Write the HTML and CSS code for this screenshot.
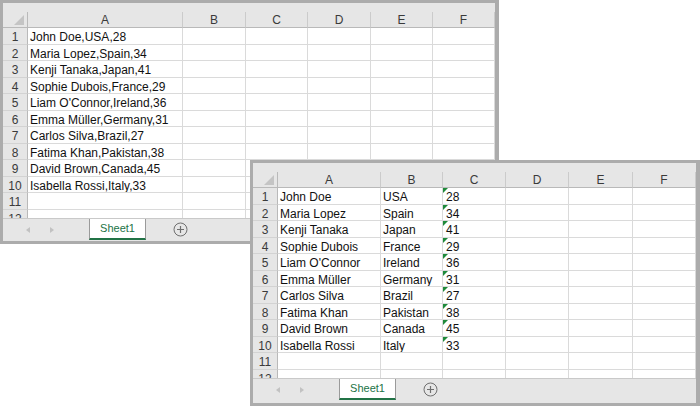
FILE: index.html
```html
<!DOCTYPE html>
<html>
<head>
<meta charset="utf-8">
<link rel="stylesheet" href="styles.css">
</head>
<body>
<div class="win win1">
  <div class="pad"></div>
  <div class="sheet">
    <div class="c corner"><span class="tri"></span></div>
    <div class="c h">A</div><div class="c h">B</div><div class="c h">C</div><div class="c h">D</div><div class="c h">E</div><div class="c h">F</div>
    <div class="c r">1</div><div class="c">John Doe,USA,28</div><div class="c"></div><div class="c"></div><div class="c"></div><div class="c"></div><div class="c"></div>
    <div class="c r">2</div><div class="c">Maria Lopez,Spain,34</div><div class="c"></div><div class="c"></div><div class="c"></div><div class="c"></div><div class="c"></div>
    <div class="c r">3</div><div class="c">Kenji Tanaka,Japan,41</div><div class="c"></div><div class="c"></div><div class="c"></div><div class="c"></div><div class="c"></div>
    <div class="c r">4</div><div class="c">Sophie Dubois,France,29</div><div class="c"></div><div class="c"></div><div class="c"></div><div class="c"></div><div class="c"></div>
    <div class="c r">5</div><div class="c">Liam O'Connor,Ireland,36</div><div class="c"></div><div class="c"></div><div class="c"></div><div class="c"></div><div class="c"></div>
    <div class="c r">6</div><div class="c">Emma Müller,Germany,31</div><div class="c"></div><div class="c"></div><div class="c"></div><div class="c"></div><div class="c"></div>
    <div class="c r">7</div><div class="c">Carlos Silva,Brazil,27</div><div class="c"></div><div class="c"></div><div class="c"></div><div class="c"></div><div class="c"></div>
    <div class="c r">8</div><div class="c">Fatima Khan,Pakistan,38</div><div class="c"></div><div class="c"></div><div class="c"></div><div class="c"></div><div class="c"></div>
    <div class="c r">9</div><div class="c">David Brown,Canada,45</div><div class="c"></div><div class="c"></div><div class="c"></div><div class="c"></div><div class="c"></div>
    <div class="c r">10</div><div class="c">Isabella Rossi,Italy,33</div><div class="c"></div><div class="c"></div><div class="c"></div><div class="c"></div><div class="c"></div>
    <div class="c r">11</div><div class="c"></div><div class="c"></div><div class="c"></div><div class="c"></div><div class="c"></div><div class="c"></div>
    <div class="c r">12</div><div class="c"></div><div class="c"></div><div class="c"></div><div class="c"></div><div class="c"></div><div class="c"></div>
  </div>
  <div class="tabs">
    <div class="nav"><span class="arr left"></span><span class="arr right"></span></div>
    <div class="tab">Sheet1</div>
    <svg class="plus" width="15" height="15" viewBox="0 0 15 15"><circle cx="7.5" cy="7.5" r="6.5" fill="none" stroke="#6f6f6f" stroke-width="1"/><path d="M7.5 4v7M4 7.5h7" stroke="#6f6f6f" stroke-width="1.2"/></svg>
  </div>
</div>

<div class="win win2">
  <div class="pad"></div>
  <div class="sheet">
    <div class="c corner"><span class="tri"></span></div>
    <div class="c h">A</div><div class="c h">B</div><div class="c h">C</div><div class="c h">D</div><div class="c h">E</div><div class="c h">F</div>
    <div class="c r">1</div><div class="c">John Doe</div><div class="c">USA</div><div class="c n">28</div><div class="c"></div><div class="c"></div><div class="c"></div>
    <div class="c r">2</div><div class="c">Maria Lopez</div><div class="c">Spain</div><div class="c n">34</div><div class="c"></div><div class="c"></div><div class="c"></div>
    <div class="c r">3</div><div class="c">Kenji Tanaka</div><div class="c">Japan</div><div class="c n">41</div><div class="c"></div><div class="c"></div><div class="c"></div>
    <div class="c r">4</div><div class="c">Sophie Dubois</div><div class="c">France</div><div class="c n">29</div><div class="c"></div><div class="c"></div><div class="c"></div>
    <div class="c r">5</div><div class="c">Liam O'Connor</div><div class="c">Ireland</div><div class="c n">36</div><div class="c"></div><div class="c"></div><div class="c"></div>
    <div class="c r">6</div><div class="c">Emma Müller</div><div class="c">Germany</div><div class="c n">31</div><div class="c"></div><div class="c"></div><div class="c"></div>
    <div class="c r">7</div><div class="c">Carlos Silva</div><div class="c">Brazil</div><div class="c n">27</div><div class="c"></div><div class="c"></div><div class="c"></div>
    <div class="c r">8</div><div class="c">Fatima Khan</div><div class="c">Pakistan</div><div class="c n">38</div><div class="c"></div><div class="c"></div><div class="c"></div>
    <div class="c r">9</div><div class="c">David Brown</div><div class="c">Canada</div><div class="c n">45</div><div class="c"></div><div class="c"></div><div class="c"></div>
    <div class="c r">10</div><div class="c">Isabella Rossi</div><div class="c">Italy</div><div class="c n">33</div><div class="c"></div><div class="c"></div><div class="c"></div>
    <div class="c r">11</div><div class="c"></div><div class="c"></div><div class="c"></div><div class="c"></div><div class="c"></div><div class="c"></div>
    <div class="c r">12</div><div class="c"></div><div class="c"></div><div class="c"></div><div class="c"></div><div class="c"></div><div class="c"></div>
  </div>
  <div class="tabs">
    <div class="nav"><span class="arr left"></span><span class="arr right"></span></div>
    <div class="tab">Sheet1</div>
    <svg class="plus" width="15" height="15" viewBox="0 0 15 15"><circle cx="7.5" cy="7.5" r="6.5" fill="none" stroke="#6f6f6f" stroke-width="1"/><path d="M7.5 4v7M4 7.5h7" stroke="#6f6f6f" stroke-width="1.2"/></svg>
  </div>
</div>
</body>
</html>
```
FILE: styles.css
```css
* { box-sizing: border-box; }
html, body { margin: 0; padding: 0; }
body {
  width: 700px;
  height: 406px;
  background: #fff;
  position: relative;
  overflow: hidden;
  font-family: "Liberation Sans", Arial, sans-serif;
}
.win {
  position: absolute;
  background: #e6e6e6;
  border: 3px solid #acacac;
  border-right-width: 4px;
  display: flex;
  flex-direction: column;
  box-sizing: content-box;
}
.win1 { left: 0; top: 0; width: 492px; }
.win2 { left: 250px; top: 160px; width: 443px; }
.pad { height: 9px; }
.sheet {
  height: 206px;
  overflow: hidden;
  display: grid;
  background: #fff;
  grid-template-rows: 16px;
  grid-auto-rows: 16.5px;
}
.win1 .sheet { grid-template-columns: 25px 155px 63px 62px 63px 62px 62px; }
.win2 .sheet { grid-template-columns: 25px 103px 62px 63px 63px 64px 63px; }
.c {
  position: relative;
  border-right: 1px solid #dadada;
  border-bottom: 1px solid #dadada;
  font-size: 12px;
  line-height: 18px;
  padding-left: 2px;
  white-space: nowrap;
  overflow: hidden;
  color: #111;
}
.h, .r, .corner {
  background: #e6e6e6;
  color: #3a3a3a;
  text-align: center;
  padding: 0;
}
.h {
  line-height: 17px;
  border-bottom: 1px solid #b9b9b9;
  border-right: 1px solid #cbcbcb;
}
.r {
  border-right: 1px solid #b9b9b9;
  border-bottom: 1px solid #d3d3d3;
}
.corner {
  border-bottom: 1px solid #b9b9b9;
  border-right: 1px solid #b9b9b9;
}
.tri {
  position: absolute;
  right: 3px;
  bottom: 2px;
  width: 0;
  height: 0;
  border-left: 10px solid transparent;
  border-bottom: 10px solid #c4c4c4;
}
.n { padding-left: 3px; }
.n::before {
  content: "";
  position: absolute;
  left: 0;
  top: 0;
  width: 0;
  height: 0;
  border-top: 5px solid #1f8a3a;
  border-right: 5px solid transparent;
}
.tabs {
  height: 23px;
  border-top: 1px solid #c9c9c9;
  display: flex;
  align-items: flex-start;
}
.win2 .tabs { height: 25px; }
.nav {
  width: 86px;
  height: 21px;
  display: flex;
  align-items: center;
  padding-left: 23px;
  gap: 20px;
}
.arr {
  width: 0;
  height: 0;
  border-top: 3.5px solid transparent;
  border-bottom: 3.5px solid transparent;
}
.arr.left { border-right: 4px solid #c2c2c2; }
.arr.right { border-left: 4px solid #c2c2c2; }
.tab {
  width: 57px;
  height: 21px;
  background: #fff;
  border-left: 1px solid #9a9a9a;
  border-right: 1px solid #9a9a9a;
  border-bottom: 2px solid #217346;
  color: #217346;
  font-size: 11px;
  line-height: 19px;
  text-align: center;
}
.plus { margin-left: 27px; margin-top: 3px; }
```
